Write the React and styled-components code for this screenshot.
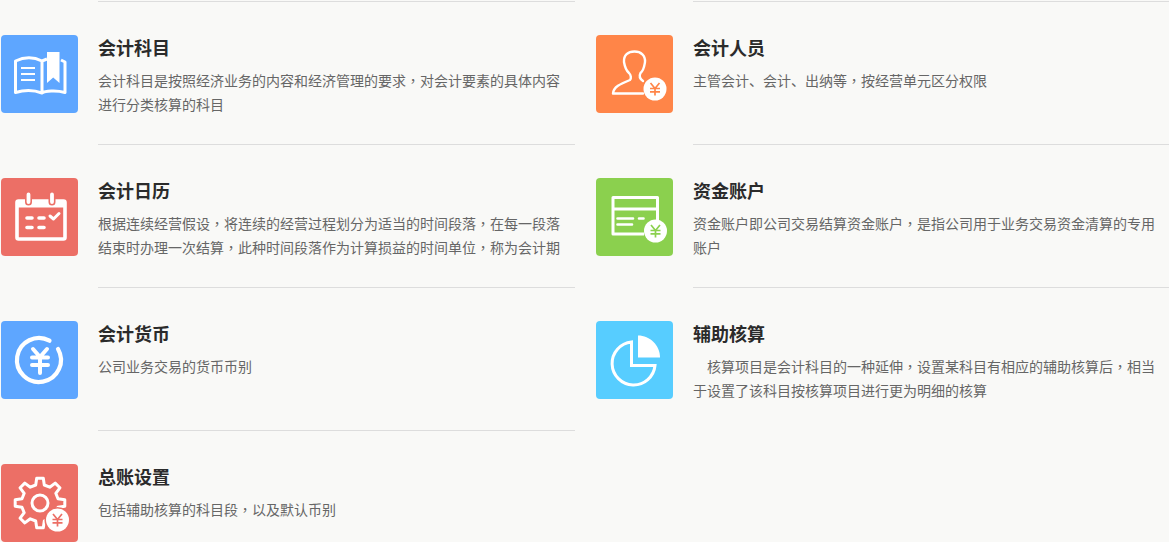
import React from 'react';
import styled, { createGlobalStyle } from 'styled-components';

const Global = createGlobalStyle`
  html, body { margin: 0; padding: 0; height: 100%; overflow: hidden; background: #f9f9f7; }
  body { font-family: "Noto Sans CJK SC", "Noto Sans", sans-serif; }
`;
const Page = styled.div`
  display: grid;
  grid-template-columns: 574px 573px;
  column-gap: 21px;
  padding: 1px 0 0 1px;
  width: 1169px;
  box-sizing: border-box;
`;
const Item = styled.section`
  display: flex;
  gap: 20px;
  height: 143px;
`;
const IconBox = styled.div`
  flex: none;
  width: 77px;
  height: 78px;
  margin-top: 34px;
  border-radius: 4px;
  background: ${p => p.$color};
  color: ${p => p.$color};
`;
const Glyph = styled.svg`
  display: block;
  width: 77px;
  height: 78px;
`;
const Body = styled.div`
  flex: 1;
  min-width: 0;
  border-top: 1px solid #ddd;
  padding: 32px 14px 0 0;
`;
const Title = styled.h3`
  margin: 0;
  font-size: 18px;
  line-height: 26px;
  font-weight: 700;
  color: #2b2b2b;
`;
const Desc = styled.p`
  margin: 8px 0 0;
  font-size: 14px;
  line-height: 24px;
  font-weight: 400;
  color: #666;
`;
const Line = styled.span`
  display: block;
  white-space: pre-wrap;
`;
const Comma = styled.span`
  font-family: "Noto Sans CJK TC", sans-serif;
`;

const Yen = ({ cx, cy }) => (
  <g>
    <circle cx={cx} cy={cy} r="11.5" fill="#fff" />
    <path
      d={`M${cx - 4.5} ${cy - 6} L${cx} ${cy - 0.5} L${cx + 4.5} ${cy - 6} M${cx - 5} ${cy - 0.5} H${cx + 5} M${cx - 5} ${cy + 2.8} H${cx + 5} M${cx} ${cy - 0.5} V${cy + 6.5}`}
      fill="none"
      stroke="currentColor"
      strokeWidth="1.7"
    />
  </g>
);

const line = { fill: 'none', stroke: '#fff', strokeWidth: 3, strokeLinecap: 'round', strokeLinejoin: 'round' };

const gearPath = (cx, cy, outer, inner, teeth) => {
  const pts = [];
  const step = (Math.PI * 2) / teeth;
  for (let i = 0; i < teeth; i += 1) {
    const a = i * step - Math.PI / 2;
    [[-0.30, inner], [-0.17, outer], [0.17, outer], [0.30, inner]].forEach(([f, r]) => {
      const t = a + f * step;
      pts.push(`${(cx + r * Math.cos(t)).toFixed(1)} ${(cy + r * Math.sin(t)).toFixed(1)}`);
    });
  }
  return `M${pts.join(' L')} Z`;
};

const BookIcon = () => (
  <Glyph viewBox="0 0 77 78">
    <path {...line} strokeLinecap="butt" d="M41 58 C33 55 23 55 14.5 57.5 V26 C23 22 33 22 41 26 V58 C44 56 55 55 64 57.5 V27 L60 25 M41 26 L46 24" />
    <path fill="#fff" d="M46 17 H58.5 V48 L52.2 42.5 L46 48 Z" />
    <path {...line} strokeWidth="1.8" strokeLinecap="butt" d="M20 33 H34 M20 39 H34 M20 45 H34" />
  </Glyph>
);
const CalendarIcon = () => (
  <Glyph viewBox="0 0 77 78">
    <rect x="16" y="23" width="48" height="38" rx="1.5" fill="none" stroke="#fff" strokeWidth="3.6" />
    <path d="M15 23 H65 V29.5 H15 Z" fill="#fff" />
    <path d="M27.5 16.5 V24 M51 16.5 V24" fill="none" stroke="currentColor" strokeWidth="7" strokeLinecap="round" />
    <path d="M27.5 16.5 V24 M51 16.5 V24" fill="none" stroke="#fff" strokeWidth="3.8" strokeLinecap="round" />
    <path {...line} strokeWidth="3.6" d="M26 40 H31 M38 40 H43 M26 49.5 H31 M38 49.5 H43" />
    <path {...line} strokeWidth="3" d="M49 38 L52.5 41 L58 35.5" />
  </Glyph>
);
const CoinIcon = () => (
  <Glyph viewBox="0 0 77 78">
    <path {...line} strokeWidth="4.2" d="M48.5 19.7 A22 22 0 1 0 57 28" />
    <path {...line} strokeWidth="4" d="M32 28 L39 36 L46 28 M31 36.5 H47 M31 44 H47 M39 36 V52" />
  </Glyph>
);
const GearIcon = () => (
  <Glyph viewBox="0 0 77 78">
    <path {...line} d={gearPath(39, 39, 25, 18.5, 8)} />
    <circle cx="39" cy="39" r="8" fill="none" stroke="#fff" strokeWidth="3" />
    <circle cx="56.5" cy="56" r="13" fill="currentColor" />
    <Yen cx={56.5} cy={56} />
  </Glyph>
);
const PersonIcon = () => (
  <Glyph viewBox="0 0 77 78">
    <path {...line} strokeWidth="2.4" d="M17 58.5 C17.5 52 24 49 34 45 C35.5 43.5 35 40 33 38 C29.5 35 28.5 30 28 27 C27.5 20 32 16.5 38.5 16.5 C45 16.5 49.5 20.5 49 27 C48.5 30 48 35 44.5 38 C43 41 44 44 47 46 M17 58.5 H47" />
    <Yen cx={59} cy={54} />
  </Glyph>
);
const CardIcon = () => (
  <Glyph viewBox="0 0 77 78">
    <path {...line} strokeWidth="3" strokeLinecap="butt" d="M48 56 H17 V19.5 H61.5 V43 M17 31 H61.5" />
    <path {...line} strokeWidth="2.6" d="M21.5 40.5 H37 M43 40.5 H47.5 M21.5 46.5 H36" />
    <Yen cx={59.5} cy={53} />
  </Glyph>
);
const PieIcon = () => (
  <Glyph viewBox="0 0 77 78">
    <path d="M42 14.5 C54 14.5 64 24.5 64 36.5 H42 Z" fill="#fff" />
    <path {...line} strokeLinecap="butt" strokeLinejoin="miter" d="M35.5 21 A21.5 21.5 0 1 0 59 44.5 H35.5 Z" />
  </Glyph>
);

const items = [
  { title: '会计科目', color: '#5ea6ff', Icon: BookIcon, lines: ['会计科目是按照经济业务的内容和经济管理的要求，对会计要素的具体内容', '进行分类核算的科目'] },
  { title: '会计人员', color: '#ff8548', Icon: PersonIcon, lines: ['主管会计、会计、出纳等，按经营单元区分权限'] },
  { title: '会计日历', color: '#ec6f66', Icon: CalendarIcon, lines: ['根据连续经营假设，将连续的经营过程划分为适当的时间段落，在每一段落', '结束时办理一次结算，此种时间段落作为计算损益的时间单位，称为会计期'] },
  { title: '资金账户', color: '#8bd04e', Icon: CardIcon, lines: ['资金账户即公司交易结算资金账户，是指公司用于业务交易资金清算的专用', '账户'] },
  { title: '会计货币', color: '#5ea6ff', Icon: CoinIcon, lines: ['公司业务交易的货币币别'] },
  { title: '辅助核算', color: '#57cdff', Icon: PieIcon, lines: ['\u3000核算项目是会计科目的一种延伸，设置某科目有相应的辅助核算后，相当', '于设置了该科目按核算项目进行更为明细的核算'] },
  { title: '总账设置', color: '#ec6f66', Icon: GearIcon, lines: ['包括辅助核算的科目段，以及默认币别'] },
];

const withCommas = text =>
  text.split('，').flatMap((part, i) => (i === 0 ? [part] : [<Comma key={i}>，</Comma>, part]));

export default function App() {
  return (
    <>
      <Global />
      <Page>
        {items.map(({ title, color, Icon, lines }) => (
          <Item key={title}>
            <IconBox $color={color}><Icon /></IconBox>
            <Body>
              <Title>{title}</Title>
              <Desc>
                {lines.map(text => <Line key={text}>{withCommas(text)}</Line>)}
              </Desc>
            </Body>
          </Item>
        ))}
      </Page>
    </>
  );
}
